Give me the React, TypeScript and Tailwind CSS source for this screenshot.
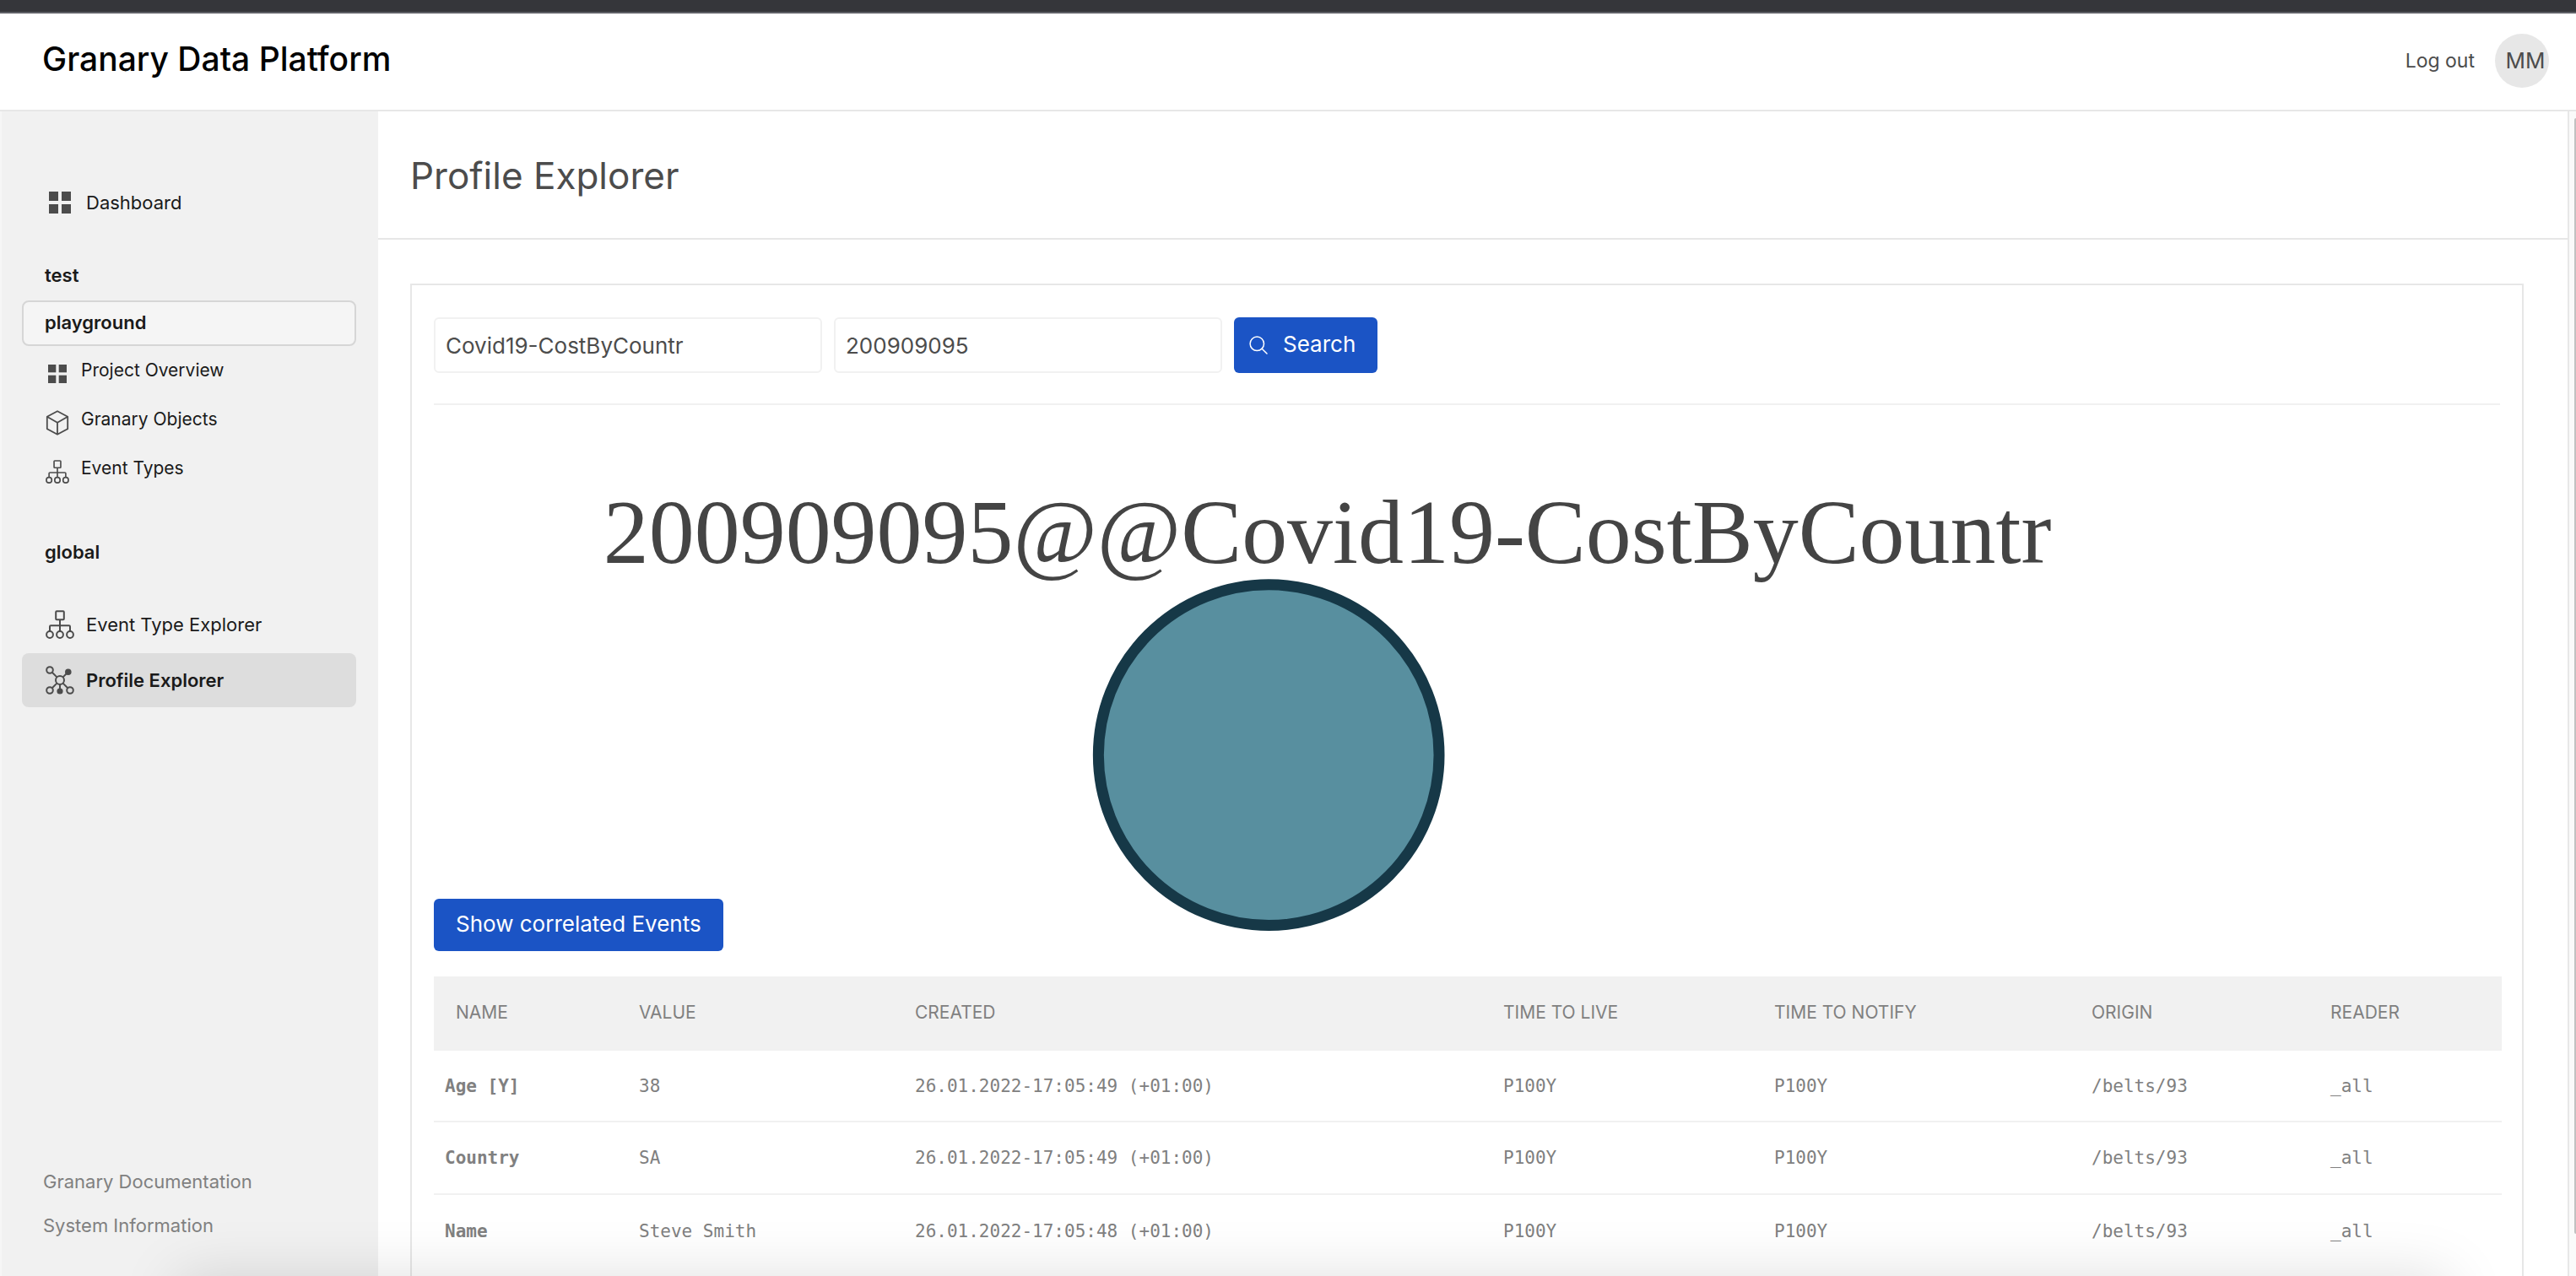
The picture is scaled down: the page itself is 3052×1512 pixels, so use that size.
import React from "react";

function GridIcon({ className }: { className: string }) {
  return (
    <svg viewBox="0 0 26 26" className={className} fill="#4c4c4c" aria-hidden="true">
      <rect x="0" y="0" width="11" height="11" />
      <rect x="15" y="0" width="11" height="11" />
      <rect x="0" y="15" width="11" height="11" />
      <rect x="15" y="15" width="11" height="11" />
    </svg>
  );
}

function CubeIcon({ className }: { className: string }) {
  return (
    <svg viewBox="0 0 28 30" className={className} fill="none" stroke="#4c4c4c" strokeWidth="1.8" strokeLinejoin="round" aria-hidden="true">
      <path d="M14 1.2 L26.2 7.8 V22.2 L14 28.8 L1.8 22.2 V7.8 Z" />
      <path d="M1.8 7.8 L14 14.8 L26.2 7.8 M14 14.8 V28.8" />
    </svg>
  );
}

function TreeIcon({ className }: { className: string }) {
  return (
    <svg viewBox="0 0 34 34" className={className} fill="none" stroke="#4c4c4c" strokeWidth="2" aria-hidden="true">
      <rect x="12.2" y="1.2" width="9.6" height="10" rx="1" />
      <path d="M17 11.2 V25 M5 25 V19.4 Q5 18.2 6.2 18.2 H27.8 Q29 18.2 29 19.4 V25" />
      <circle cx="5" cy="29" r="3.9" />
      <circle cx="17" cy="29" r="3.9" />
      <circle cx="29" cy="29" r="3.9" />
    </svg>
  );
}

function NetworkIcon({ className }: { className: string }) {
  return (
    <svg viewBox="0 0 34 34" className={className} fill="none" stroke="#4c4c4c" strokeWidth="2" aria-hidden="true">
      <circle cx="17" cy="17" r="5" />
      <circle cx="5" cy="5" r="3.8" />
      <circle cx="5" cy="29" r="3.8" />
      <circle cx="29" cy="29" r="3.8" />
      <path d="M7.8 7.8 L13.4 13.4 M20.6 13.4 L27 7 M13.4 20.6 L7.8 26.2 M20.6 20.6 L26.2 26.2 M17 22 V29" />
      <circle cx="26.8" cy="7.2" r="2.8" fill="#4c4c4c" />
      <circle cx="17" cy="30" r="2.6" fill="#4c4c4c" />
    </svg>
  );
}

function SearchIcon() {
  return (
    <svg viewBox="0 0 22 22" className="size-[22px]" fill="none" stroke="#fff" strokeWidth="1.5" strokeLinecap="round" aria-hidden="true">
      <circle cx="9.3" cy="9.3" r="8.2" />
      <path d="M15.2 15.2 L21 21" />
    </svg>
  );
}

const projectLinks = [
  { label: "Project Overview", icon: <GridIcon className="size-[22px]" /> },
  { label: "Granary Objects", icon: <CubeIcon className="h-[30px] w-7" /> },
  { label: "Event Types", icon: <TreeIcon className="size-7" /> },
];

const columns = [
  { label: "Name", width: "w-[230px]" },
  { label: "Value", width: "w-[327px]" },
  { label: "Created", width: "w-[697px]" },
  { label: "Time to live", width: "w-[321px]" },
  { label: "Time to notify", width: "w-[376px]" },
  { label: "Origin", width: "w-[283px]" },
  { label: "Reader", width: "w-[216px]" },
];

const rows = [
  ["Age [Y]", "38", "26.01.2022-17:05:49 (+01:00)", "P100Y", "P100Y", "/belts/93", "_all"],
  ["Country", "SA", "26.01.2022-17:05:49 (+01:00)", "P100Y", "P100Y", "/belts/93", "_all"],
  ["Name", "Steve Smith", "26.01.2022-17:05:48 (+01:00)", "P100Y", "P100Y", "/belts/93", "_all"],
];

function Header() {
  return (
    <header className="flex shrink-0 items-center justify-between border-b-2 border-[#e7e7e7] pt-6 pr-8 pb-[26px] pl-[50px]">
      <div className="mb-1 text-[39px] leading-[48px] font-medium text-black">Granary Data Platform</div>
      <div className="flex items-center gap-6 text-[#4c4c4c]">
        <a href="#logout" className="text-[23px] leading-8">Log out</a>
        <span className="flex size-16 items-center justify-center rounded-full bg-[#e7e7e7] pl-2 text-[26px] leading-8">MM</span>
      </div>
    </header>
  );
}

function Sidebar() {
  return (
    <aside className="flex w-[448px] shrink-0 flex-col border-l-2 border-[#f6f6f6] bg-[#f1f1f1] pr-[26px] pl-6 text-[22px] leading-7 text-[#1a1a1a]">
      <nav className="flex flex-col pt-[76px]">
        <a href="#dashboard" className="flex h-16 items-center gap-[14px] pl-7">
          <span className="flex w-[34px] justify-center"><GridIcon className="size-[26px]" /></span>
          Dashboard
        </a>
        <a href="#test" className="mt-10 mb-4 px-[27px] font-semibold">test</a>
        <a href="#playground" className="rounded-lg border-2 border-[#d6d6d6] bg-[#f5f5f5] px-[25px] pt-[10px] pb-3 font-semibold">playground</a>
        {projectLinks.map((link) => (
          <a key={link.label} href="#project" className="flex h-[58px] items-center gap-[14px] pl-7 text-[21px]">
            <span className="mt-2 flex w-7 justify-center">{link.icon}</span>
            {link.label}
          </a>
        ))}
        <a href="#global" className="mt-14 mb-10 px-[27px] font-semibold">global</a>
        <a href="#event-types" className="flex h-16 items-center gap-[14px] pl-7">
          <TreeIcon className="size-[34px]" />
          Event Type Explorer
        </a>
        <a href="#profiles" aria-current="page" className="mt-0.5 flex h-16 items-center gap-[14px] rounded-lg bg-[#ddd] pl-7 font-semibold">
          <NetworkIcon className="size-[34px]" />
          Profile Explorer
        </a>
      </nav>
      <div className="mt-auto flex flex-col gap-6 pb-[46px] pl-[25px] text-[#808080]">
        <a href="#docs">Granary Documentation</a>
        <a href="#system">System Information</a>
      </div>
    </aside>
  );
}

function ProfileGraph() {
  return (
    <svg viewBox="0 0 2450 640" className="-mb-[54px] block w-full" role="img" aria-label="Profile graph">
      <circle cx="990" cy="415" r="202" fill="#588f9f" stroke="#163847" strokeWidth="13" />
      <text x="201" y="187" fill="#444" fontSize="108" fontFamily="'Liberation Serif', serif">
        200909095@@Covid19-CostByCountr
      </text>
    </svg>
  );
}

function AttributeTable() {
  return (
    <table className="mt-[30px] w-full table-fixed text-left text-[#808080]">
      <thead className="bg-[#f1f1f1] text-[21px] leading-7">
        <tr>
          {columns.map((column) => (
            <th key={column.label} scope="col" className={`${column.width} h-[88px] px-[13px] pb-0.5 font-normal uppercase first:pl-[26px]`}>
              {column.label}
            </th>
          ))}
        </tr>
      </thead>
      <tbody className="font-['DejaVu_Sans_Mono',monospace] text-[21px] leading-7">
        {rows.map((row) => (
          <tr key={row[0]} className="h-[86px] border-b-2 border-[#f1f1f1] first:h-[84px] last:border-b-0">
            {row.map((cell, index) =>
              index === 0 ? (
                <th key={index} scope="row" className="px-[13px] font-bold">{cell}</th>
              ) : (
                <td key={index} className="px-[13px]">{cell}</td>
              ),
            )}
          </tr>
        ))}
      </tbody>
    </table>
  );
}

export default function App() {
  return (
    <div className="relative flex h-screen flex-col overflow-hidden bg-white font-['Inter',sans-serif]">
      <div className="h-4 shrink-0 border-b-2 border-[#5f6066] bg-[#35363a]" />
      <Header />
      <div className="flex min-h-0 flex-1">
        <Sidebar />
        <main className="min-w-0 flex-1 overflow-hidden">
          <div className="border-b-2 border-[#e7e7e7] px-[38px] pt-12 pb-[46px]">
            <h1 className="text-[44px] leading-[56px] text-[#4c4c4c]">Profile Explorer</h1>
          </div>
          <section className="mt-[52px] mr-[52px] ml-[38px] border-2 border-[#e7e7e7] px-[26px] pt-[38px] pb-24">
            <form className="flex gap-[14px] border-b-2 border-[#f1f1f1] pb-9" onSubmit={(event) => event.preventDefault()}>
              <input aria-label="Profile type" defaultValue="Covid19-CostByCountr" className="h-[66px] w-[460px] rounded-md border-2 border-[#f1f1f1] px-3 text-[26px] text-[#4c4c4c]" />
              <input aria-label="Profile id" defaultValue="200909095" className="h-[66px] w-[460px] rounded-md border-2 border-[#f1f1f1] px-3 text-[26px] text-[#4c4c4c]" />
              <button type="submit" className="flex h-[66px] items-center gap-[18px] rounded-md bg-[#1b54c5] pr-[26px] pb-1 pl-[18px] text-[26px] text-white">
                <span className="mt-1"><SearchIcon /></span>
                Search
              </button>
            </form>
            <ProfileGraph />
            <button type="button" className="relative block h-[62px] rounded-md bg-[#1b54c5] px-[26px] pb-1 text-[26px] text-white">
              Show correlated Events
            </button>
            <AttributeTable />
          </section>
        </main>
        <div className="flex w-[10px] shrink-0 justify-end border-l-2 border-[#e7e7e7] bg-[#fafafa] pt-2 pb-[50px]">
          <div className="w-0.5 rounded-l-sm bg-[#c1c1c1]" />
        </div>
      </div>
      <div className="pointer-events-none absolute top-full right-[150px] left-[210px] h-24 shadow-[0_0_70px_rgba(0,0,0,0.13)]" />
    </div>
  );
}
